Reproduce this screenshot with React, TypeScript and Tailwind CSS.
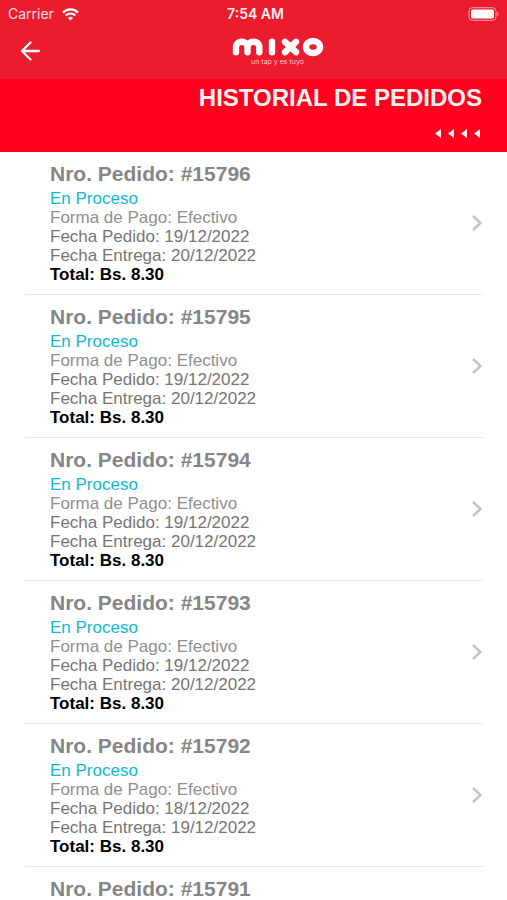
type OrderDetails = {
  status: string
  payment: string
  orderDate: string
  deliveryDate: string
  total: string
}

type Order = {
  id: number
  details?: OrderDetails
}

const orders: Order[] = [
  { id: 15796, details: { status: 'En Proceso', payment: 'Efectivo', orderDate: '19/12/2022', deliveryDate: '20/12/2022', total: '8.30' } },
  { id: 15795, details: { status: 'En Proceso', payment: 'Efectivo', orderDate: '19/12/2022', deliveryDate: '20/12/2022', total: '8.30' } },
  { id: 15794, details: { status: 'En Proceso', payment: 'Efectivo', orderDate: '19/12/2022', deliveryDate: '20/12/2022', total: '8.30' } },
  { id: 15793, details: { status: 'En Proceso', payment: 'Efectivo', orderDate: '19/12/2022', deliveryDate: '20/12/2022', total: '8.30' } },
  { id: 15792, details: { status: 'En Proceso', payment: 'Efectivo', orderDate: '18/12/2022', deliveryDate: '19/12/2022', total: '8.30' } },
  { id: 15791 },
]

function StatusBar() {
  return (
    <div className="grid h-7 grid-cols-3 items-center px-2 font-['Inter',sans-serif] text-sm text-white">
      <div className="flex items-center gap-2">
        <span className="text-[#ffdfe2]">Carrier</span>
        <svg width="17" height="13" viewBox="0 0 17 13" fill="none" stroke="currentColor" strokeWidth="2.2" aria-hidden="true">
          <path d="M1 4.6C5.2.4 11.8.4 16 4.6" />
          <path d="M3.7 7.5c2.7-2.7 6.9-2.7 9.6 0" />
          <path d="M5.9 9.9c1.5-1.4 3.7-1.4 5.2 0L8.5 12.6Z" fill="currentColor" stroke="none" />
        </svg>
      </div>
      <span className="pl-1 text-center font-semibold text-[#fff0f1]">7:54 AM</span>
      <svg className="justify-self-end" width="32" height="14" viewBox="0 0 32 14" aria-label="Batería">
        <rect x="2" y="0.7" width="27" height="12.6" rx="3.5" fill="none" stroke="#f7a3aa" />
        <rect x="4" y="2.5" width="23" height="9" rx="1.8" fill="#fff" />
        <path d="M30.2 4.8c1.6.7 1.6 3.7 0 4.4Z" fill="#f7a3aa" />
      </svg>
    </div>
  )
}

function Logo() {
  return (
    <div className="flex flex-col items-center text-white">
      <svg width="92" height="20" viewBox="0 0 92 20" fill="none" stroke="currentColor" strokeWidth="6.4" strokeLinecap="round" strokeLinejoin="round" aria-label="mixo">
        <path d="M4 15.2V10C4 6.500 6.400 4.800 9.500 4.800S15.500 6.500 15.500 10V15.200M15.500 10C15.500 6.500 18 4.800 21.300 4.800S27.300 6.500 27.300 10V15.200" />
        <path d="M40 4.8V15.200" />
        <path d="M53 4.8 64 15.200M64 4.8 53 15.200" />
        <ellipse cx="81" cy="10" rx="7" ry="6" />
      </svg>
      <span className="font-['Inter',sans-serif] text-[7px] leading-[9px] text-[#ffc9cd]">un tap y es tuyo</span>
    </div>
  )
}

function Header() {
  return (
    <header className="shrink-0 bg-[#eb1c2e]">
      <StatusBar />
      <div className="grid h-[51px] grid-cols-[1fr_auto_1fr] px-5">
        <button type="button" aria-label="Volver" className="mt-[11px] h-6 w-6 text-white">
          <svg width="22" height="22" viewBox="0 0 22 22" fill="none" stroke="currentColor" strokeWidth="2.3" strokeLinecap="round" strokeLinejoin="round">
            <path d="M10.5 2.5 2 11l8.5 8.5M2 11h17" />
          </svg>
        </button>
        <div className="mt-[9px] pl-12">
          <Logo />
        </div>
      </div>
    </header>
  )
}

function TitleBanner() {
  return (
    <div className="flex h-[73px] shrink-0 flex-col items-end bg-[#ff001e] pt-[3px] pr-[25px] text-[#fff0f1]">
      <h1 className="text-2xl leading-8 font-bold">HISTORIAL DE PEDIDOS</h1>
      <svg className="mt-[13px]" width="47" height="12" viewBox="0 0 47 12" fill="currentColor" aria-hidden="true">
        <path d="M0 6.5 6 2v9ZM13 6.5 19 2v9ZM26 6.5 32 2v9ZM39 6.5 45 2v9Z" />
      </svg>
    </div>
  )
}

function OrderRow({ order }: { order: Order }) {
  const { id, details } = order

  return (
    <li className="border-b border-[#e9e9e9] last:border-b-0">
      <button type="button" className="flex w-full items-center justify-between py-2.5 pl-[25px] text-left">
        <div className="text-[17px] leading-[19px] text-[#757575]">
          <h2 className="mb-[3px] text-[21px] leading-6 font-bold text-[#868686]">Nro. Pedido: #{id}</h2>
          {details ? (
            <>
              <p className="text-[#12b9ce]">{details.status}</p>
              <p className="text-[#8f8f8f]">Forma de Pago: {details.payment}</p>
              <p>Fecha Pedido: {details.orderDate}</p>
              <p>Fecha Entrega: {details.deliveryDate}</p>
              <p className="font-bold text-black">Total: Bs. {details.total}</p>
            </>
          ) : null}
        </div>
        {details ? (
          <svg width="12" height="18" viewBox="0 0 12 18" fill="none" stroke="#c4c4c4" strokeWidth="2.4" aria-hidden="true">
            <path d="m2 2 7.5 7L2 16" />
          </svg>
        ) : null}
      </button>
    </li>
  )
}

export default function App() {
  return (
    <div className="flex h-screen flex-col overflow-hidden bg-white font-['Liberation_Sans',Arial,sans-serif]">
      <Header />
      <TitleBanner />
      <main className="min-h-0 flex-1 overflow-y-auto pr-6 pl-[25px] [scrollbar-width:none]">
        <ul>
          {orders.map((order) => (
            <OrderRow key={order.id} order={order} />
          ))}
        </ul>
      </main>
    </div>
  )
}
